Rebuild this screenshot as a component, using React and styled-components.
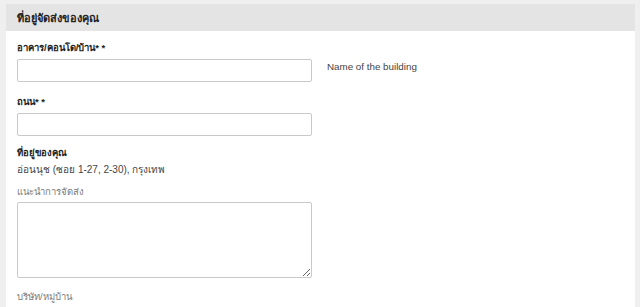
import React from "react";
import styled, { createGlobalStyle } from "styled-components";

const Global = createGlobalStyle`
  html, body { margin: 0; padding: 0; background: #efefef; }
  body { font-family: "Liberation Sans", "Noto Sans", sans-serif; color: #333; }
  * { box-sizing: border-box; }
`;

const Page = styled.div`
  padding: 4px 5px 0 6px;
  height: 307px;
  overflow: hidden;
`;

const Panel = styled.section`
  background: #fff;
  height: 100%;
`;

const Header = styled.header`
  background: #e4e4e4;
  height: 27px;
  display: flex;
  align-items: center;
  padding-left: 11px;
  font-size: 11px;
  font-weight: bold;
  color: #222;
`;

const Body = styled.div`
  padding: 10px 11px 0 11px;
`;

const Row = styled.div`
  display: flex;
  align-items: flex-start;
  gap: 15px;
  margin-bottom: ${p => p.gap || 0}px;
`;

const Field = styled.div`
  width: 295px;
`;

const Label = styled.div`
  font-size: 9.5px;
  font-weight: ${p => (p.plain ? "normal" : "bold")};
  color: ${p => (p.plain ? "#7a7a7a" : "#222")};
  height: 14px;
  line-height: 14px;
  margin-top: ${p => p.mt || 0}px;
  margin-bottom: ${p => p.mb || 4}px;
`;

const Text = styled.div`
  font-size: 10px;
  color: #444;
  height: 14px;
  line-height: 14px;
  margin-bottom: 8px;
`;

const Input = styled.input`
  display: block;
  width: 295px;
  height: 23px;
  border: 1px solid #c9c9c9;
  border-radius: 2px;
  background: #fff;
`;

const Area = styled.textarea`
  display: block;
  width: 295px;
  height: 76px;
  border: 1px solid #c9c9c9;
  border-radius: 2px;
  background: #fff;
`;

const Help = styled.div`
  font-size: 9.8px;
  color: #444;
  padding-top: 20px;
`;

export default function App() {
  return (
    <>
      <Global />
      <Page>
        <Panel>
          <Header>ที่อยู่จัดส่งของคุณ</Header>
          <Body>
            <Row gap={13}>
              <Field>
                <Label>อาคาร/คอนโด/บ้าน* *</Label>
                <Input />
              </Field>
              <Help>Name of the building</Help>
            </Row>
            <Row gap={10}>
              <Field>
                <Label>ถนน* *</Label>
                <Input />
              </Field>
            </Row>
            <Label mb={3}>ที่อยู่ของคุณ</Label>
            <Text>อ่อนนุช (ซอย 1-27, 2-30), กรุงเทพ</Text>
            <Label plain mb={3}>แนะนำการจัดส่ง</Label>
            <Area />
            <Label plain mt={12}>บริษัท/หมู่บ้าน</Label>
            <Input />
          </Body>
        </Panel>
      </Page>
    </>
  );
}
